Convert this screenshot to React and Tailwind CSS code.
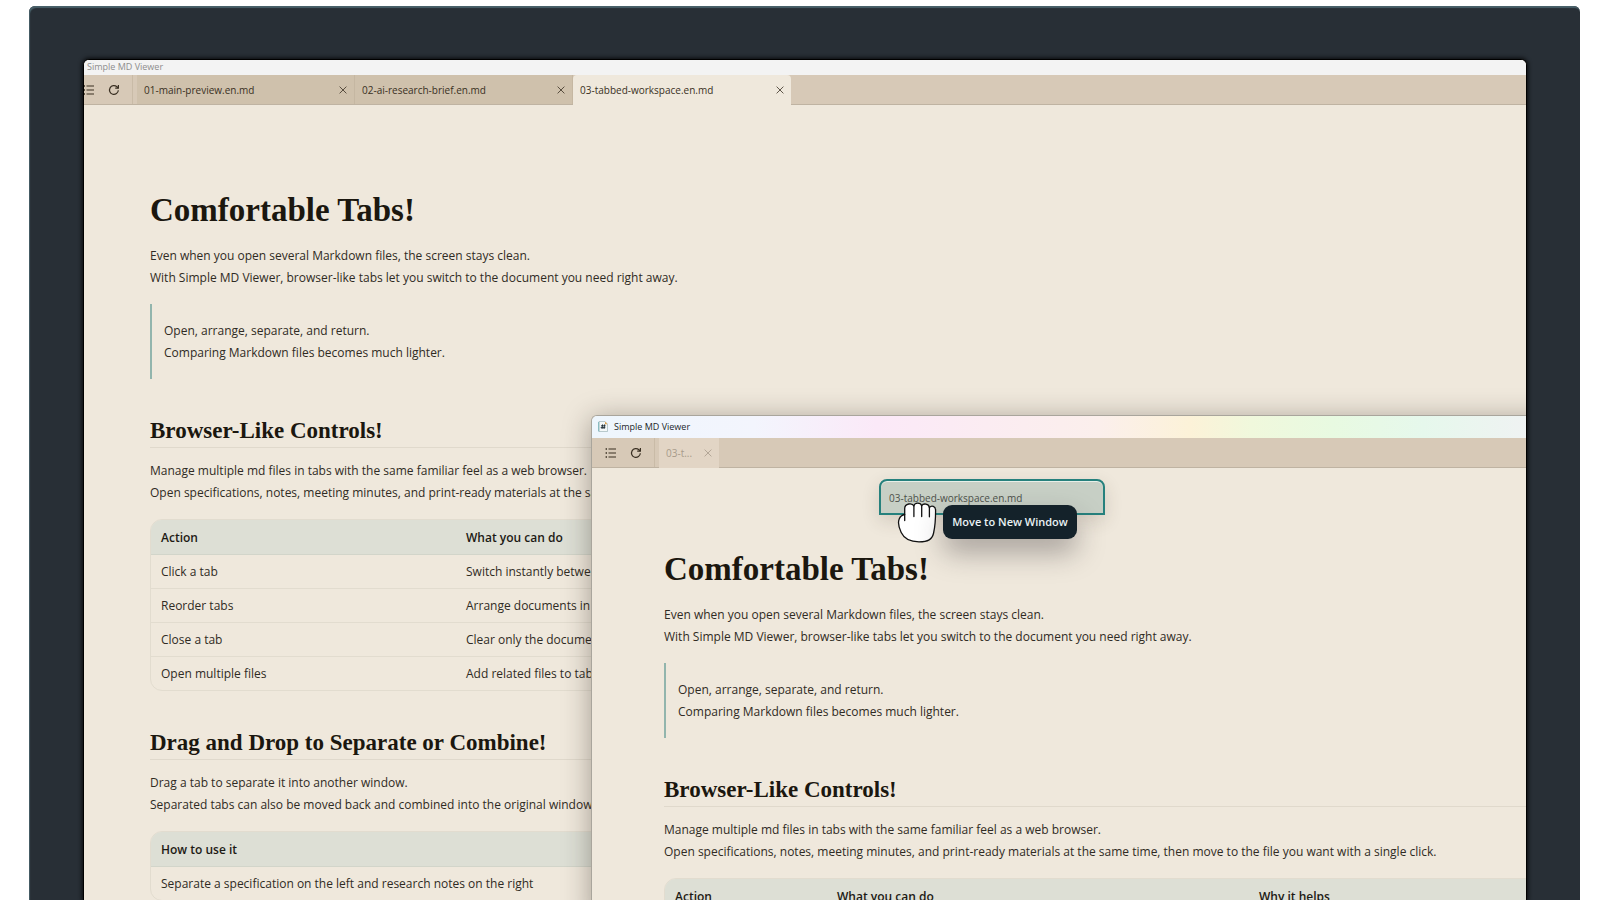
import React from 'react';

const tabs = ['01-main-preview.en.md', '02-ai-research-brief.en.md', '03-tabbed-workspace.en.md'];

const actions = [
  ['Click a tab', 'Switch instantly between documents', 'Stay in one window'],
  ['Reorder tabs', 'Arrange documents in the order you need', 'Keep your flow'],
  ['Close a tab', 'Clear only the documents you finished', 'Keep things tidy'],
  ['Open multiple files', 'Add related files to tabs', 'Compare them easily'],
];

const usages = ['Separate a specification on the left and research notes on the right'];

const ListIcon = () => (
  <svg width="12" height="12" viewBox="0 0 12 12" fill="none" stroke="currentColor" strokeWidth="1.2">
    <path d="M3.5 2H11M3.5 6H11M3.5 10H11" />
    <path d="M0.6 2H2M0.6 6H2M0.6 10H2" strokeWidth="1.5" />
  </svg>
);

const ReloadIcon = () => (
  <svg width="12" height="12" viewBox="0 0 12 12" fill="none" stroke="currentColor" strokeWidth="1.2">
    <path d="M10.3 6.2A4.4 4.4 0 1 1 8.9 2.8L10.2 4" />
    <path d="M10.4 1V4.2H7.2" />
  </svg>
);

const CloseIcon = () => (
  <svg width="8" height="8" viewBox="0 0 8 8" fill="none" stroke="currentColor" strokeWidth="0.8">
    <path d="M0.6 0.6L7.4 7.4M7.4 0.6L0.6 7.4" />
  </svg>
);

const AppIcon = () => (
  <svg width="10" height="11" viewBox="0 0 10 11">
    <path d="M1 0.5H7L9.5 3V10.5H1Z" fill="#f4f8f8" stroke="#9fb4b8" strokeWidth="0.7" />
    <path d="M7 0.5L9.5 3.2H7Z" fill="#e0a04a" />
    <path d="M0.7 1V10.4" stroke="#6fb0b4" strokeWidth="0.9" />
    <path d="M4.6 3.4L4 8M6.6 3.4L6 8M3 4.8H7.6M2.7 6.6H7.3" stroke="#1d2b33" strokeWidth="0.9" />
  </svg>
);

const GrabHand = () => (
  <svg width="40" height="42" viewBox="0 0 40 42" fill="#fff" stroke="#111" strokeWidth="1.3" strokeLinejoin="round" strokeLinecap="round">
    <path d="M7.7 12.5V6.5C7.7 1.2 15.3 .6 16.9 4C17.6 .2 23.6 .2 24.7 3.8C26.3 .9 32 1.6 32.4 5.6C34.5 3 38.7 4.2 38.6 8.6C38.6 16 38.2 24 36.6 31C35.2 37.5 31 39.8 22 39.8C13 39.8 7.5 37.5 4.2 30.5C1.5 25 .8 20.5 2.2 17C3.2 14.5 5 13 7.7 12.5Z" />
    <path d="M7.7 12.5V18.5M16.9 4V14.6M24.7 3.8V14.6M32.4 5.6V14.8" />
  </svg>
);

const TabBar = ({ children }) => (
  <div className="flex h-[30px] bg-[#d7c9b7] border-b border-[#bfb3a2] text-[#3a3023]">
    <div className="flex items-center w-[62px] pl-[13px] gap-[13px] shrink-0">
      <button type="button" aria-label="Outline"><ListIcon /></button>
      <button type="button" aria-label="Reload"><ReloadIcon /></button>
    </div>
    <div className="w-px mr-1 bg-[#c9bba7]" />
    {children}
  </div>
);

const DataTable = ({ head, rows, widths }) => (
  <div className="mt-[15px] border border-[#e2dccf] rounded-xl overflow-hidden">
    <table className="w-full table-fixed border-collapse text-left">
      <thead>
        <tr className="h-[34px] bg-[#dddfd5] border-b border-[#d2d5ca] text-[#1c1a14]">
          {head.map((h, i) => (
            <th key={h} className={`px-[10px] pt-0.5 font-semibold ${widths[i]}`}>{h}</th>
          ))}
        </tr>
      </thead>
      <tbody>
        {rows.map((row) => (
          <tr key={row[0]} className="h-[34px] border-b border-[#e2dccf] last:border-b-0">
            {row.map((cell) => (
              <td key={cell} className="px-[10px] pt-0.5 whitespace-nowrap">{cell}</td>
            ))}
          </tr>
        ))}
      </tbody>
    </table>
  </div>
);

const Heading = ({ children }) => (
  <h2 className="mt-[37px] mb-3 pb-px border-b border-[#e0d9cc] font-['Palatino_Linotype','Liberation_Serif',serif] font-bold text-[23px] leading-[30px] text-[#1b170f]">
    {children}
  </h2>
);

const Article = ({ widths }) => (
  <article className="text-[12px] leading-[22px] text-[#2f2b24]">
    <h1 className="font-['Palatino_Linotype','Liberation_Serif',serif] font-bold text-[33px] leading-[44px] mb-[13px] text-[#1b170f]">
      Comfortable Tabs!
    </h1>
    <p>
      Even when you open several Markdown files, the screen stays clean.<br />
      With Simple MD Viewer, browser-like tabs let you switch to the document you need right away.
    </p>
    <blockquote className="mt-[15px] pt-4 pb-[15px] pl-3 border-l-2 border-[#92b5ad]">
      Open, arrange, separate, and return.<br />
      Comparing Markdown files becomes much lighter.
    </blockquote>

    <Heading>Browser-Like Controls!</Heading>
    <p>
      Manage multiple md files in tabs with the same familiar feel as a web browser.<br />
      Open specifications, notes, meeting minutes, and print-ready materials at the same time, then move to the file you want with a single click.
    </p>
    <DataTable head={['Action', 'What you can do', 'Why it helps']} rows={actions} widths={widths} />

    <Heading>Drag and Drop to Separate or Combine!</Heading>
    <p>
      Drag a tab to separate it into another window.<br />
      Separated tabs can also be moved back and combined into the original window.
    </p>
    <DataTable head={['How to use it']} rows={usages.map((u) => [u])} widths={['w-full']} />
  </article>
);

const NewWindow = () => (
  <section className="absolute top-[355px] left-[507px] -right-20 -bottom-5 overflow-hidden rounded-tl-md border-t border-l border-[#a9a59c] bg-[#efe8dc] shadow-[0_4px_28px_rgba(40,30,20,0.38)]">
    <header className="flex items-center gap-[6px] h-[22px] pl-[6px] pb-px text-[9px] text-[#22262a] bg-[linear-gradient(90deg,#eef6fd_0%,#f3f5fd_16%,#fbe9f8_28%,#fbefec_50%,#fcf2d8_59%,#f0f8dc_65%,#e8fae1_73%,#e6f8ec_82%,#f0f2f3_93%)]">
      <AppIcon />
      <span>Simple MD Viewer</span>
    </header>
    <TabBar>
      <div className="flex items-center justify-between w-[60px] -mb-px px-[7px] bg-[#e2d5c5] text-[10px] text-[#a79b8b]">
        <span>03-t...</span>
        <button type="button" aria-label="Close tab"><CloseIcon /></button>
      </div>
    </TabBar>
    <div className="pt-[79px] pl-[72px] pr-8">
      <Article widths={['w-[162px]', 'w-[422px]', '']} />
    </div>
  </section>
);

// Tab being dragged, with the cursor and the drop hint on top of it
const DraggedTab = () => (
  <div className="absolute top-[419px] left-[795px] w-[226px] h-[36px]">
    <div className="h-full pl-2 pt-[7px] rounded-t-lg border-2 border-[#26817d] bg-[#c7cfc5] text-[10px] leading-[20px] text-[#4d514b] shadow-[inset_0_1px_0_#e8efe8,0_6px_18px_rgba(60,50,40,0.16)]">
      03-tabbed-workspace.en.md
    </div>
    <div className="absolute top-[23px] left-[18px]"><GrabHand /></div>
    <div role="tooltip" className="absolute top-[26px] left-[64px] flex items-center justify-center w-[134px] h-[34px] rounded-[9px] bg-[#14222a] text-[11px] font-semibold text-[#eaf3f5] whitespace-nowrap shadow-[0_14px_28px_rgba(40,35,40,0.35)]">
      Move to New Window
    </div>
  </div>
);

const App = () => {
  return (
    <div className="h-screen overflow-hidden bg-white pt-[6px] pl-[29px] pr-[20px] font-['Segoe_UI','Open_Sans',sans-serif]">
      <div className="h-full flex flex-col pt-[53px] pl-[54px] pr-[53px] rounded-t-md bg-[#282f36] shadow-[inset_1px_2px_1px_#49616a]">
        <main className="relative flex-1 min-h-0 overflow-hidden rounded-t-md border-t border-x border-black bg-[#efe8dc] shadow-[0_0_4px_1px_rgba(0,0,0,0.8)]">
          <header className="h-[15px] pl-[3px] bg-[#f3f3f3] text-[9px] leading-[14px] text-[#8d8d8d]">Simple MD Viewer</header>
          <div className="-ml-[14px]">
            <TabBar>
              {tabs.map((tab, i) => (
                <div
                  key={tab}
                  className={`flex items-center justify-between w-[218px] px-[7px] text-[10px] ${i === 2 ? '-mb-px rounded-t bg-[#efe8dc]' : 'pt-px bg-[#cfc1ac] border-r border-[#c5b7a2]'}`}
                >
                  <span>{tab}</span>
                  <button type="button" aria-label={`Close ${tab}`}><CloseIcon /></button>
                </div>
              ))}
            </TabBar>
          </div>
          <div className="pt-[83px] pl-[66px] pr-16">
            <Article widths={['w-[305px]', '', '']} />
          </div>
          <NewWindow />
          <DraggedTab />
        </main>
      </div>
    </div>
  );
};

export default App;
